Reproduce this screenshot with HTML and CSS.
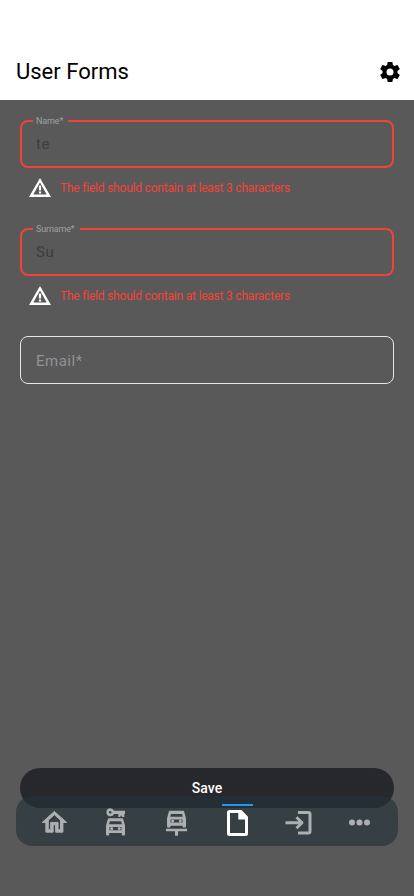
FILE: index.html
```
<!DOCTYPE html>
<html lang="en">
<head>
<meta charset="utf-8">
<meta name="viewport" content="width=device-width, initial-scale=1">
<title>User Forms</title>
<link rel="stylesheet" href="styles.css">
</head>
<body>
<div class="screen">
  <header class="header">
    <h1 class="title">User Forms</h1>
    <svg class="cog" viewBox="0 0 24 24"><path d="M12,15.5A3.5,3.5 0 0,1 8.5,12A3.5,3.5 0 0,1 12,8.5A3.5,3.5 0 0,1 15.5,12A3.5,3.5 0 0,1 12,15.5M19.43,12.97C19.47,12.65 19.5,12.33 19.5,12C19.5,11.67 19.47,11.34 19.43,11L21.54,9.37C21.73,9.22 21.78,8.95 21.66,8.73L19.66,5.27C19.54,5.05 19.27,4.96 19.05,5.05L16.56,6.05C16.04,5.66 15.5,5.32 14.87,5.07L14.5,2.42C14.46,2.18 14.25,2 14,2H10C9.75,2 9.54,2.18 9.5,2.42L9.13,5.07C8.5,5.32 7.96,5.66 7.44,6.05L4.95,5.05C4.73,4.96 4.46,5.05 4.34,5.27L2.34,8.73C2.21,8.95 2.27,9.22 2.46,9.37L4.57,11C4.53,11.34 4.5,11.67 4.5,12C4.5,12.33 4.53,12.65 4.57,12.97L2.46,14.63C2.27,14.78 2.21,15.05 2.34,15.27L4.34,18.73C4.46,18.95 4.73,19.03 4.95,18.95L7.44,17.94C7.96,18.34 8.5,18.68 9.13,18.93L9.5,21.58C9.54,21.82 9.75,22 10,22H14C14.25,22 14.46,21.82 14.5,21.58L14.87,18.93C15.5,18.67 16.04,18.34 16.56,17.94L19.05,18.95C19.27,19.03 19.54,18.95 19.66,18.73L21.66,15.27C21.78,15.05 21.73,14.78 21.54,14.63L19.43,12.97Z"/></svg>
  </header>
  <main class="form">
    <div class="group">
      <div class="field invalid"><span class="label">Name*</span><span class="value">te</span></div>
      <div class="error"><svg class="alert" viewBox="0 0 24 24"><path fill-rule="evenodd" d="M12 2L1 21H23zM12 6.600L18.700 18.500H5.300z"/><path d="M10.900 9.500h2.200v5h-2.200zM10.900 15.500h2.200v2h-2.200z"/></svg><span>The field should contain at least 3 characters</span></div>
    </div>
    <div class="group">
      <div class="field invalid"><span class="label">Surname*</span><span class="value">Su</span></div>
      <div class="error"><svg class="alert" viewBox="0 0 24 24"><path fill-rule="evenodd" d="M12 2L1 21H23zM12 6.600L18.700 18.500H5.300z"/><path d="M10.900 9.500h2.200v5h-2.200zM10.900 15.500h2.200v2h-2.200z"/></svg><span>The field should contain at least 3 characters</span></div>
    </div>
    <div class="field"><span class="placeholder">Email*</span></div>
  </main>
  <div class="save">Save</div>
  <nav class="tabs">
    <div class="tab"><svg viewBox="-.3 -.3 24.600 24.600"><path class="bold" d="M12 5.690L17 10.190V18H15V12H9V18H7V10.190L12 5.690M12 3L2 12H5V20H11V14H13V20H19V12H22L12 3"/></svg></div>
    <div class="tab"><svg viewBox="0 0 30 30"><path fill-rule="evenodd" d="M9.700 .8a4 4 0 0 1 3.800 2.500h11v3.200h-.7v3h-2.600v-1.300h-1.400v1.300h-2v-3h-4.300A4 4 0 1 1 9.700 .8zm0 2.700a1.300 1.300 0 1 0 0 2.600 1.300 1.300 0 0 0 0-2.600z"/><path fill-rule="evenodd" d="M8.500 10.800h13q1 0 1.200 1l1.800 6.200v9q0 1-1 1h-1.200q-1 0-1-1v-1.500H8.700V27q0 1-1 1H6.500q-1 0-1-1v-9l1.800-6.200q.2-1 1.200-1zm.9 3-.9 3h13l-.9-3zM9 19.500v3.200h12v-3.200z"/><circle cx="11.200" cy="21.100" r="1.500"/><circle cx="18.800" cy="21.100" r="1.500"/></svg></div>
    <div class="tab"><svg viewBox="0 0 30 30"><path fill-rule="evenodd" d="M8.500 3.200h13q1 0 1.200 1l1.800 6.600v8.200q0 1-1 1H22q-1 0-1-1v-.8H9v.8q0 1-1 1H6.500q-1 0-1-1v-8.200l1.800-6.600q.2-1 1.200-1zm.9 3.200-.6 2.800h12.400l-.6-2.800zM9 12v3h12v-3z"/><circle cx="11.200" cy="13.500" r="1.500"/><circle cx="18.800" cy="13.500" r="1.500"/><path d="M4.500 21.200h21v2.500h-9v4.500h-3v-4.500h-9z"/></svg></div>
    <div class="tab active"><svg viewBox="0 0 30 30"><path fill-rule="evenodd" d="M7 2.500h12l6.500 6.700v16.800a2.500 2.500 0 0 1-2.500 2.500H7A2.500 2.500 0 0 1 4.500 26V5A2.500 2.500 0 0 1 7 2.500zm.5 3v20h15V12h-6.700V5.500z"/></svg></div>
    <div class="tab"><svg viewBox="0 0 30 30"><path class="line" d="M14.500 5h10.300q1.700 0 1.700 1.700v17.100q0 1.700-1.700 1.700H14.500M2 15.200h16.500M13 9.700l5.500 5.500-5.500 5.500"/></svg></div>
    <div class="tab"><svg viewBox="0 0 30 30"><circle cx="7.500" cy="15" r="3"/><circle cx="15" cy="15" r="3"/><circle cx="22.500" cy="15" r="3"/></svg></div>
  </nav>
</div>
</body>
</html>
```
FILE: styles.css
```
* { box-sizing: border-box; }
body { margin: 0; font-family: Roboto, sans-serif; background: #595959; }
.screen { height: 896px; display: flex; flex-direction: column; overflow: hidden; }
.header { height: 100px; padding: 44px 12px 0 16px; background: #fff; display: flex; align-items: center; justify-content: space-between; }
.title { margin: 0; font-size: 22px; font-weight: 400; line-height: 28px; color: #000; }
.cog { width: 24px; height: 24px; fill: #000; }
.form { flex: 1; padding: 20px 20px 0; }
.group { height: 108px; }
.field { position: relative; height: 48px; border: 1px solid #e6e6e6; border-radius: 8px; padding: 0 15px; display: flex; align-items: center; font-size: 15px; letter-spacing: .5px; }
.invalid { border: 2px solid #f44336; padding: 0 14px; }
.label { position: absolute; left: 11px; top: -7px; padding: 0 5px 0 3px; background: #595959; color: #a0a0a3; font-size: 9px; line-height: 12px; letter-spacing: -.15px; }
.value { color: #3d3d3d; }
.placeholder { color: #919195; padding-top: 2px; }
.error { height: 40px; padding-left: 8px; display: flex; align-items: center; gap: 8px; color: #f44336; font-size: 12px; letter-spacing: -.21px; }
.alert { width: 24px; height: 24px; fill: #fff; }
.save { height: 40px; margin: 0 20px; border-radius: 20px; background: #27282c; color: #fff; font-size: 14px; font-weight: 500; display: flex; align-items: center; justify-content: center; }
.tabs { position: relative; height: 50px; margin: -12px 16px 50px; padding: 0 8px; border-radius: 16px; background: rgba(35, 49, 57, .65); display: flex; }
.tab { position: relative; flex: 1; display: flex; align-items: center; justify-content: center; padding-top: 3px; }
.tab svg { width: 30px; height: 30px; fill: #adb0b2; }
.tab svg > * { transform: translate(-.5px, -.5px); }
.tab .bold { stroke: #adb0b2; stroke-width: .8; }
.tab .line { fill: none; stroke: #adb0b2; stroke-width: 3; stroke-linejoin: round; }
.active svg { fill: #fff; }
.active::before { content: ""; position: absolute; top: 8px; width: 31px; height: 2px; background: #2196f3; }
```
